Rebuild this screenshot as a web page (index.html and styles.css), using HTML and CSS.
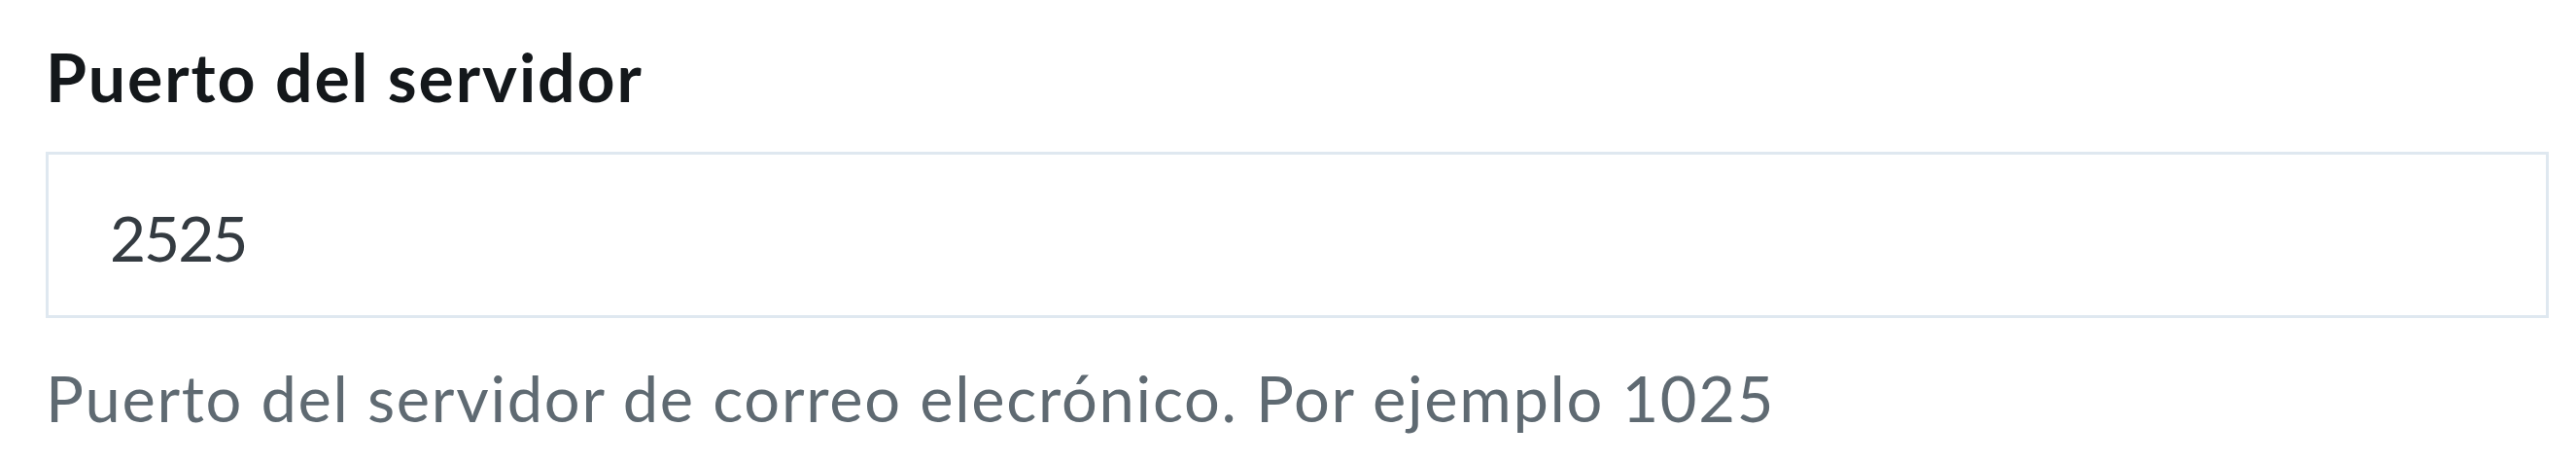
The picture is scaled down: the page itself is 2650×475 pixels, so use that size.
FILE: index.html
```html
<!DOCTYPE html>
<html lang="es">
<head>
<meta charset="utf-8">
<link rel="stylesheet" href="styles.css">
</head>
<body>
<div class="field">
  <label class="field-label" for="port">Puerto del servidor</label>
  <input class="field-input" id="port" type="text" value="2525">
  <p class="field-help">Puerto del servidor de correo elecrónico. Por ejemplo 1025</p>
</div>
</body>
</html>
```
FILE: styles.css
```css
html, body {
  margin: 0;
  padding: 0;
  background: #ffffff;
}
body {
  font-family: Lato, "Liberation Sans", sans-serif;
}
.field {
  display: flex;
  flex-direction: column;
  padding: 38px 28px 0 47px;
}
.field-label {
  font-size: 68px;
  line-height: 1.2;
  font-weight: 700;
  letter-spacing: 1.9px;
  color: #14181b;
}
.field-input {
  box-sizing: border-box;
  width: 100%;
  height: 171px;
  margin-top: 36px;
  padding: 6px 0 0 63px;
  border: 3px solid #dfe8f0;
  border-radius: 0;
  background: #ffffff;
  font-family: Lato, "Liberation Sans", sans-serif;
  font-size: 64px;
  letter-spacing: -2px;
  color: #343b41;
  outline: none;
}
.field-help {
  margin: 43px 0 0 0;
  font-size: 65px;
  line-height: 1.2;
  letter-spacing: 1.7px;
  color: #5f6a72;
}
```
